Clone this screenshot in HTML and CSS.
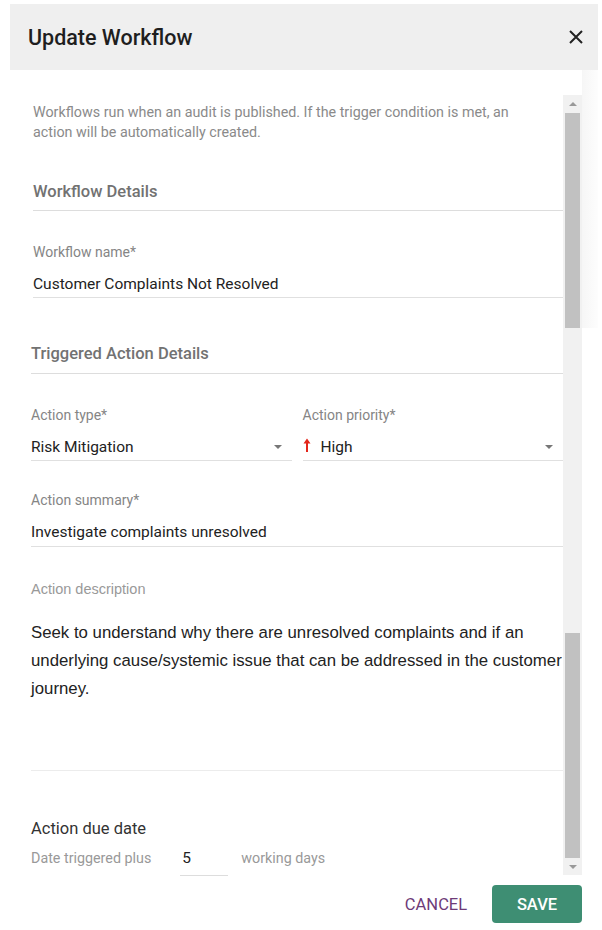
FILE: index.html
```html
<!DOCTYPE html>
<html lang="en">
<head>
    <meta charset="UTF-8">
    <meta name="viewport" content="width=device-width, initial-scale=1.0">
    <title>Update Workflow</title>
    <link rel="stylesheet" href="styles.css">
</head>
<body>

<div class="dialog">
    <div class="dialog-header">
        <h2>Update Workflow</h2>
        <button class="close-btn" aria-label="Close">
            <svg width="14" height="14" viewBox="0 0 14 14"><path d="M1 1 L13 13 M13 1 L1 13" stroke="#222" stroke-width="2" fill="none"/></svg>
        </button>
    </div>

    <div class="dialog-main">
        <div class="dialog-content">
            <p class="intro">Workflows run when an audit is published. If the trigger condition is met, an action will be automatically created.</p>

            <div class="section-title first">Workflow Details</div>

            <div class="field first">
                <div class="field-label">Workflow name*</div>
                <div class="field-value">Customer Complaints Not Resolved</div>
            </div>

            <div class="section-title second">Triggered Action Details</div>

            <div class="field-row">
                <div class="field half">
                    <div class="field-label">Action type*</div>
                    <div class="field-value select">
                        <span>Risk Mitigation</span>
                        <span class="caret"></span>
                    </div>
                </div>
                <div class="field half">
                    <div class="field-label">Action priority*</div>
                    <div class="field-value select">
                        <span class="priority">
                            <svg width="8" height="14" viewBox="0 0 8 14"><path d="M4 0.5 L7.5 5.5 L5 5.5 L5 14 L3 14 L3 5.5 L0.5 5.5 Z" fill="#e3261b"/></svg>
                            High
                        </span>
                        <span class="caret"></span>
                    </div>
                </div>
            </div>

            <div class="field summary">
                <div class="field-label">Action summary*</div>
                <div class="field-value">Investigate complaints unresolved</div>
            </div>

            <div class="description">
                <div class="description-label">Action description</div>
                <div class="description-text">Seek to understand why there are unresolved complaints and if an underlying cause/systemic issue that can be addressed in the customer journey.</div>
            </div>

            <div class="due-title">Action due date</div>
            <div class="due-row">
                <span>Date triggered plus</span>
                <span class="days-input">5</span>
                <span>working days</span>
            </div>
        </div>

        <div class="scrollbar">
            <div class="arrow up"></div>
            <div class="thumb top"></div>
            <div class="track"></div>
            <div class="thumb bottom"></div>
            <div class="arrow down"></div>
        </div>

        <div class="shade"></div>
    </div>

    <div class="dialog-footer">
        <button class="btn btn-cancel">CANCEL</button>
        <button class="btn btn-save">SAVE</button>
    </div>
</div>

</body>
</html>
```

FILE: styles.css
```css
body {
    margin: 0;
    font-family: Roboto, "Liberation Sans", Arial, sans-serif;
    background-color: #fff;
    color: #222;
}
.dialog {
    width: 588px;
    margin: 4px 0 0 10px;
}
.dialog-header {
    height: 66px;
    background-color: #efefef;
    display: flex;
    align-items: center;
    justify-content: space-between;
    padding: 0 15px 0 18px;
}
.dialog-header h2 {
    margin: 0;
    font-size: 21.5px;
    font-weight: 500;
    color: #1e1e1e;
}
.close-btn {
    border: none;
    background: none;
    padding: 0;
    width: 14px;
    height: 14px;
    display: flex;
}
.dialog-main {
    display: flex;
    align-items: flex-start;
}
.dialog-content {
    width: 553px;
    box-sizing: border-box;
    padding-left: 21px;
}
.intro {
    margin: 32px 0 0 2px;
    font-size: 14.3px;
    line-height: 20px;
    color: #8a8a8a;
    padding-right: 40px;
}
.section-title {
    font-size: 16.5px;
    font-weight: 500;
    line-height: 20px;
    color: #727272;
    border-bottom: 1px solid #ddd;
    padding-bottom: 8px;
}
.section-title.first {
    margin: 40px 0 0 2px;
}
.section-title.second {
    margin-top: 46px;
    padding-bottom: 9px;
}
.field {
    border: none;
}
.field.first {
    margin: 33px 0 0 2px;
}
.field-label {
    font-size: 14px;
    line-height: 16px;
    color: #858585;
}
.field-value {
    margin-top: 14px;
    font-size: 15.5px;
    line-height: 20px;
    color: #222;
    padding-bottom: 3px;
    border-bottom: 1px solid #e0e0e0;
}
.field-row {
    display: flex;
    gap: 11px;
    margin-top: 33px;
}
.half {
    flex: 1;
}
.select {
    display: flex;
    justify-content: space-between;
    align-items: center;
}
.caret {
    width: 0;
    height: 0;
    border-left: 4.5px solid transparent;
    border-right: 4.5px solid transparent;
    border-top: 4.5px solid #777;
    margin-right: 10px;
}
.priority {
    display: flex;
    align-items: center;
    gap: 10px;
}
.priority svg {
    margin-top: -5px;
}
.summary {
    margin-top: 31px;
}
.summary .field-value {
    padding-bottom: 4px;
}
.description {
    margin-top: 34px;
    font-family: "Liberation Sans", Arial, sans-serif;
    border-bottom: 1px solid #ececec;
    padding-bottom: 67px;
}
.description-label {
    font-size: 14.5px;
    line-height: 16px;
    color: #999;
}
.description-text {
    margin-top: 22px;
    font-size: 16.8px;
    line-height: 28px;
    color: #222;
    margin-right: -6px;
}
.due-title {
    margin-top: 48px;
    font-size: 16.5px;
    line-height: 20px;
    color: #333;
}
.due-row {
    margin-top: 9px;
    display: flex;
    align-items: flex-start;
    font-size: 14.3px;
    line-height: 20px;
    color: #999;
}
.days-input {
    width: 46px;
    margin: 0 13px 0 29px;
    padding: 0 0 7px 2px;
    font-size: 15.5px;
    color: #222;
    border-bottom: 1px solid #ddd;
}
.scrollbar {
    width: 19px;
    height: 780px;
    margin-top: 25px;
    background-color: #f1f1f1;
    display: flex;
    flex-direction: column;
    align-items: center;
}
.arrow {
    height: 18px;
    width: 100%;
    display: flex;
    align-items: center;
    justify-content: center;
}
.arrow.up::before,
.arrow.down::before {
    content: "";
    width: 0;
    height: 0;
    border-left: 4px solid transparent;
    border-right: 4px solid transparent;
}
.arrow.up::before {
    border-bottom: 4px solid #999;
}
.arrow.down {
    height: 17px;
}
.arrow.down::before {
    border-top: 4px solid #999;
}
.thumb {
    width: 15px;
    background-color: #c1c1c1;
}
.thumb.top {
    height: 215px;
}
.thumb.bottom {
    height: 225px;
}
.track {
    height: 305px;
}
.shade {
    width: 16px;
    height: 258px;
    background: linear-gradient(to right, #f6f6f6, #fdfdfd);
}
.dialog-footer {
    display: flex;
    justify-content: flex-end;
    gap: 11px;
    padding-right: 16px;
    margin-top: 9px;
}
.btn {
    height: 38px;
    width: 90px;
    border: none;
    border-radius: 4px;
    font-family: Roboto, "Liberation Sans", Arial, sans-serif;
    font-size: 16.5px;
    font-weight: 400;
    cursor: pointer;
}
.btn-cancel {
    background: none;
    color: #6e3b78;
}
.btn-save {
    background-color: #3e8e73;
    color: #fff;
    font-weight: 500;
}
```
